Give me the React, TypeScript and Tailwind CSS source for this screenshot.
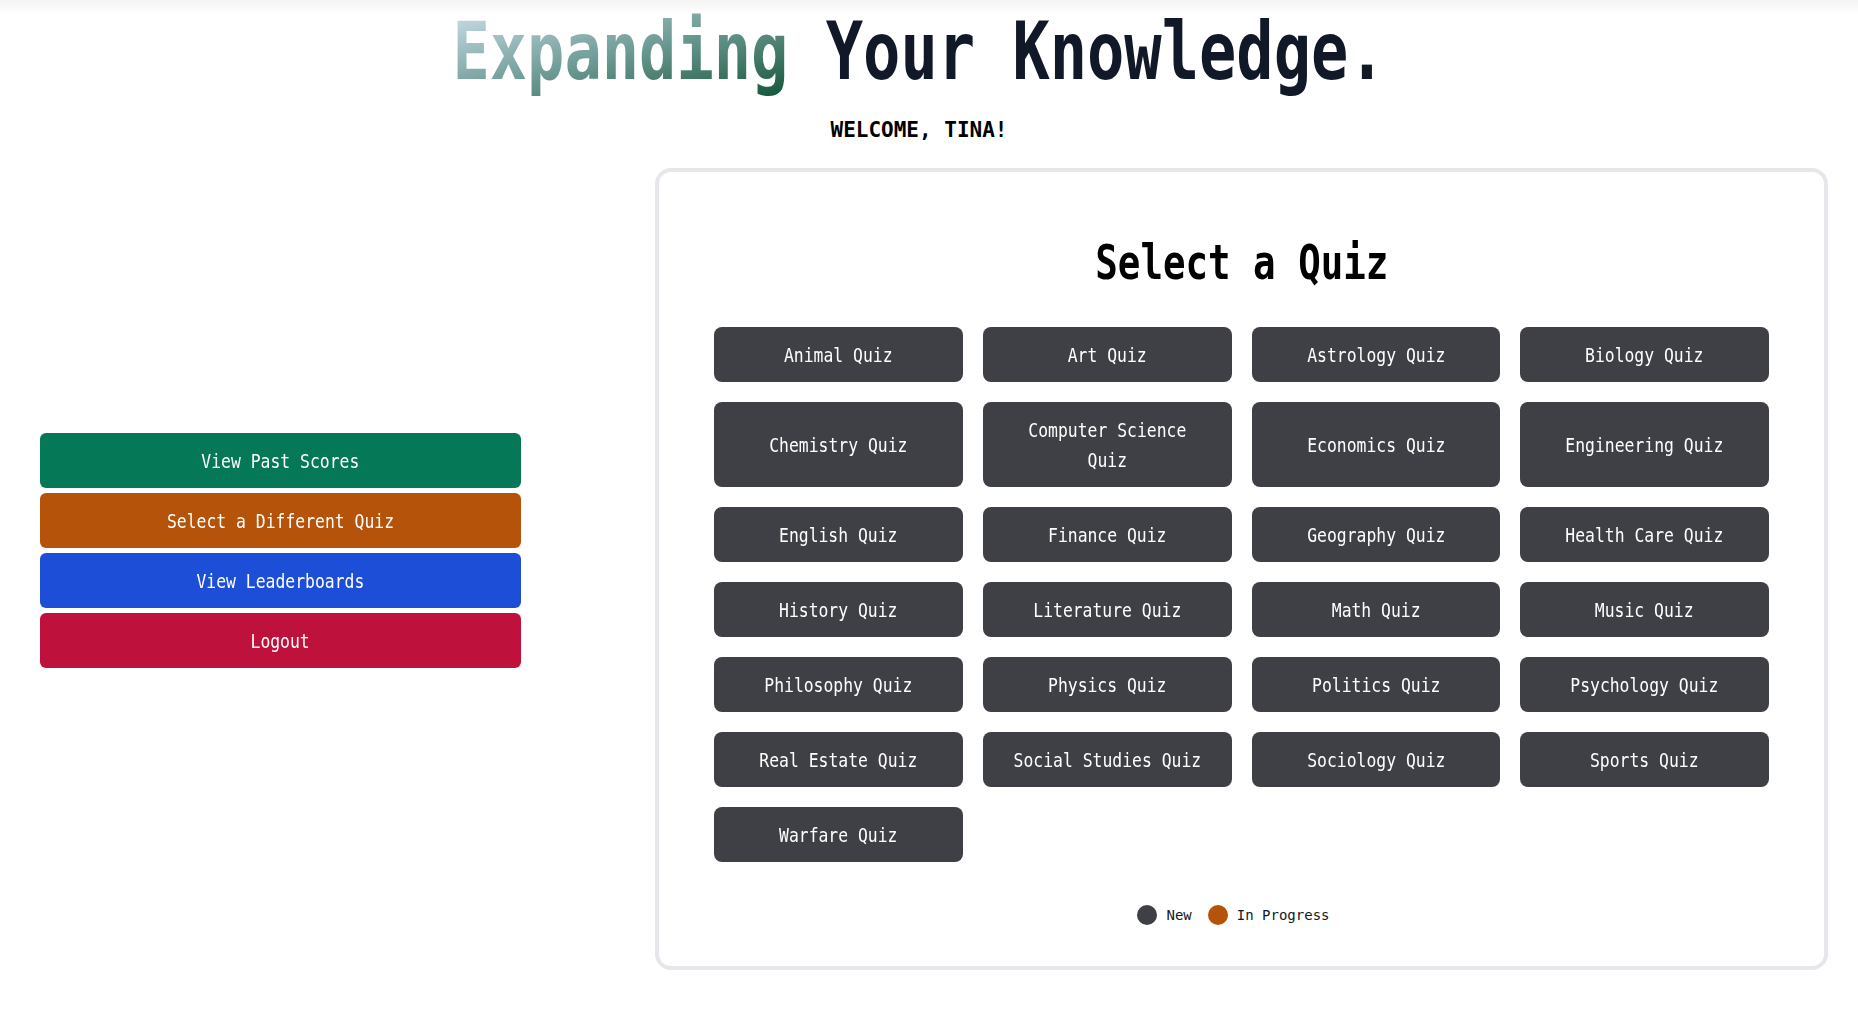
import type { ReactNode } from 'react';

const quizzes = [
  'Animal Quiz',
  'Art Quiz',
  'Astrology Quiz',
  'Biology Quiz',
  'Chemistry Quiz',
  'Computer Science\nQuiz',
  'Economics Quiz',
  'Engineering Quiz',
  'English Quiz',
  'Finance Quiz',
  'Geography Quiz',
  'Health Care Quiz',
  'History Quiz',
  'Literature Quiz',
  'Math Quiz',
  'Music Quiz',
  'Philosophy Quiz',
  'Physics Quiz',
  'Politics Quiz',
  'Psychology Quiz',
  'Real Estate Quiz',
  'Social Studies Quiz',
  'Sociology Quiz',
  'Sports Quiz',
  'Warfare Quiz',
];

const sideActions = [
  { label: 'View Past Scores', color: 'bg-[#047857]' },
  { label: 'Select a Different Quiz', color: 'bg-[#b45309]' },
  { label: 'View Leaderboards', color: 'bg-[#1d4ed8]' },
  { label: 'Logout', color: 'bg-[#be123c]' },
];

// the original font is a narrow mono, so squeeze DejaVu a bit
function Narrow({ children }: { children: ReactNode }) {
  return (
    <span className="inline-block whitespace-pre-line text-center scale-x-[0.82]">
      {children}
    </span>
  );
}

export default function App() {
  return (
    <div className="min-h-[1012px] w-full bg-[linear-gradient(to_bottom,#f4f4f4,#ffffff_14px)] font-['DejaVu_Sans_Mono',monospace]">
      <header className="flex flex-col items-center pt-[12px] pr-[20px]">
        <h1 className="text-[80px] font-bold leading-none text-[#111827]">
          <span className="inline-block whitespace-nowrap scale-x-[0.775]">
            <span className="bg-linear-to-br from-[#d3e3ee] via-[#6f9c97] to-[#0a5538] bg-clip-text text-transparent">
              Expanding
            </span>{' '}
            Your Knowledge.
          </span>
        </h1>
        <p className="mt-[28px] text-[21px] font-semibold leading-none text-black">
          WELCOME, TINA!
        </p>
      </header>

      <main className="mt-[27px] flex items-start pl-10 pr-[30px]">
        <nav className="mt-[265px] flex w-[481px] shrink-0 flex-col gap-[5px]">
          {sideActions.map((a) => (
            <button
              key={a.label}
              className={`flex h-[55px] items-center justify-center rounded-md text-xl leading-[30px] text-white ${a.color}`}
            >
              <Narrow>{a.label}</Narrow>
            </button>
          ))}
        </nav>

        <section className="ml-[134px] flex-1 rounded-2xl border-4 border-[#e5e7eb] px-[55px] pt-[66px] pb-[41px]">
          <h2 className="text-center text-5xl font-bold leading-none text-black">
            <span className="inline-block scale-x-[0.78]">Select a Quiz</span>
          </h2>

          <div className="mt-[41px] grid grid-cols-4 gap-5">
            {quizzes.map((q) => (
              <button
                key={q}
                className="flex items-center justify-center rounded-lg bg-[#3f3f46] px-2 py-[12.5px] text-xl leading-[30px] text-white"
              >
                <Narrow>{q}</Narrow>
              </button>
            ))}
          </div>

          <div className="mt-[43px] flex items-center justify-center gap-4 pr-4 text-sm leading-5 text-[#111827]">
            <div className="flex items-center gap-[9px]">
              <span className="h-5 w-5 rounded-full bg-[#3f3f46]" />
              <span>New</span>
            </div>
            <div className="flex items-center gap-[9px]">
              <span className="h-5 w-5 rounded-full bg-[#b45309]" />
              <span>In Progress</span>
            </div>
          </div>
        </section>
      </main>
    </div>
  );
}
